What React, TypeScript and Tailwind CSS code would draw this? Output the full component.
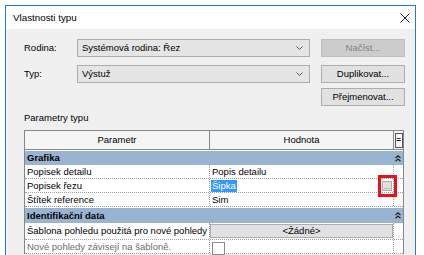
export default function App() {
  return (
    <div className="w-[424px] h-[255px] overflow-hidden bg-white pl-[5px] pt-[5px] font-['Liberation_Sans',Arial,sans-serif] text-[9.5px] leading-[12px] text-black">
      <div className="w-[411px] h-[262px] border border-[#1a7fd4] bg-[#f0f0f0] flex flex-col">
        {/* title bar */}
        <div className="h-[23px] bg-white flex items-center justify-between pl-[7px] pr-[5px]">
          <span className="text-[9.8px]">Vlastnosti typu</span>
          <svg width="10" height="10" viewBox="0 0 10 10">
            <path d="M0.5 0.5 L9.5 9.5 M9.5 0.5 L0.5 9.5" stroke="#222" strokeWidth="1" />
          </svg>
        </div>

        <div className="pl-[18px] pr-[10px] pt-[10px] flex flex-col">
          <div className="flex items-center h-[18px]">
            <span className="w-[53px]">Rodina:</span>
            <Combo text="Systémová rodina: Řez" />
            <Btn text="Načíst..." disabled />
          </div>
          <div className="flex items-center h-[18px] mt-[8px]">
            <span className="w-[53px]">Typ:</span>
            <Combo text="Výstuž" />
            <Btn text="Duplikovat..." />
          </div>
          <div className="flex items-center justify-end h-[18px] mt-[5px]">
            <Btn text="Přejmenovat..." />
          </div>

          <div className="mt-[6px]">Parametry typu</div>

          <div className="mt-[6px] w-[380px] border border-[#828790] border-b-0 bg-white">
            {/* header */}
            <div className="flex h-[19px] bg-[#f5f5f5] border-b border-[#828790]">
              <div className="w-[184px] flex items-center justify-center">Parametr</div>
              <div className="w-[184px] border-l border-[#828790] flex items-center justify-center">Hodnota</div>
              <div className="w-[10px] border-l border-[#828790] flex items-center justify-center">
                <div className="w-[8px] h-[15px] border border-[#555] flex items-center justify-center text-[8px] font-bold">=</div>
              </div>
            </div>

            <Band text="Grafika" />
            <Row name="Popisek detailu">
              <span className="pl-[2px]">Popis detailu</span>
            </Row>
            <Row name="Popisek řezu" relative>
              <span className="ml-[1px] bg-[#3399ff] text-white px-[1px]">Šipka</span>
              <div className="absolute right-[1px] top-[2px] w-[10px] h-[10px] bg-[#e1e1e1] border border-[#adadad] flex items-end justify-center text-[7px] leading-[7px] text-[#444]">...</div>
              <div className="absolute right-[-4px] top-[-4px] w-[19px] h-[22px] border-[3px] border-[#e8101a]" />
            </Row>
            <Row name="Štítek reference">
              <span className="pl-[2px]">Sim</span>
            </Row>
            <Band text="Identifikační data" tall />
            <Row name="Šablona pohledu použitá pro nové pohledy" tall>
              <div className="w-full h-[14px] bg-[#e1e1e1] border border-[#adadad] flex items-center justify-center">&lt;Žádné&gt;</div>
            </Row>
            <Row name="Nové pohledy závisejí na šabloně." muted>
              <div className="ml-[2px] mt-[2px] w-[13px] h-[13px] bg-white border border-[#8a8a8a] self-start" />
            </Row>
          </div>
        </div>
      </div>
    </div>
  );
}

function Combo({ text }: { text: string }) {
  return (
    <div className="w-[233px] h-[18px] bg-[#e5e5e5] border border-[#adadad] flex items-center justify-between pl-[4px] pr-[6px]">
      <span>{text}</span>
      <svg width="7" height="4" viewBox="0 0 7 4">
        <path d="M0.5 0.5 L3.5 3.5 L6.5 0.5" fill="none" stroke="#555" strokeWidth="1" />
      </svg>
    </div>
  );
}

function Btn({ text, disabled }: { text: string; disabled?: boolean }) {
  return (
    <div
      className={
        disabled
          ? "ml-auto w-[84px] h-[18px] bg-[#cccccc] border border-[#bfbfbf] text-[#838383] flex items-center justify-center"
          : "ml-auto w-[84px] h-[18px] bg-[#e1e1e1] border border-[#adadad] flex items-center justify-center"
      }
    >
      {text}
    </div>
  );
}

function Band({ text, tall }: { text: string; tall?: boolean }) {
  return (
    <div className={tall ? "flex items-center justify-between h-[15px] bg-[#99b4d1] pl-[2px] pr-[2px] mt-[1px]" : "flex items-center justify-between h-[14px] bg-[#99b4d1] pl-[2px] pr-[2px] mt-[1px]"}>
      <span className="font-bold">{text}</span>
      <svg width="6" height="7" viewBox="0 0 6 7">
        <path d="M0.5 3 L3 0.8 L5.5 3 M0.5 6.2 L3 4 L5.5 6.2" fill="none" stroke="#222" strokeWidth="1.2" />
      </svg>
    </div>
  );
}

function Row({
  name,
  children,
  relative,
  muted,
  tall,
}: {
  name: string;
  children?: React.ReactNode;
  relative?: boolean;
  muted?: boolean;
  tall?: boolean;
}) {
  return (
    <div className={tall ? "flex h-[17px] border-b border-dotted border-[#a0a0a0]" : "flex h-[14px] border-b border-dotted border-[#a0a0a0]"}>
      <div className={muted ? "w-[184px] pl-[2px] flex items-center text-[#6d6d6d] whitespace-nowrap overflow-hidden" : "w-[184px] pl-[2px] flex items-center whitespace-nowrap overflow-hidden"}>
        {name}
      </div>
      <div className={relative ? "relative w-[184px] border-l border-dotted border-[#a0a0a0] flex items-center" : "w-[184px] border-l border-dotted border-[#a0a0a0] flex items-center"}>
        {children}
      </div>
      <div className="w-[10px] border-l border-dotted border-[#a0a0a0]" />
    </div>
  );
}
